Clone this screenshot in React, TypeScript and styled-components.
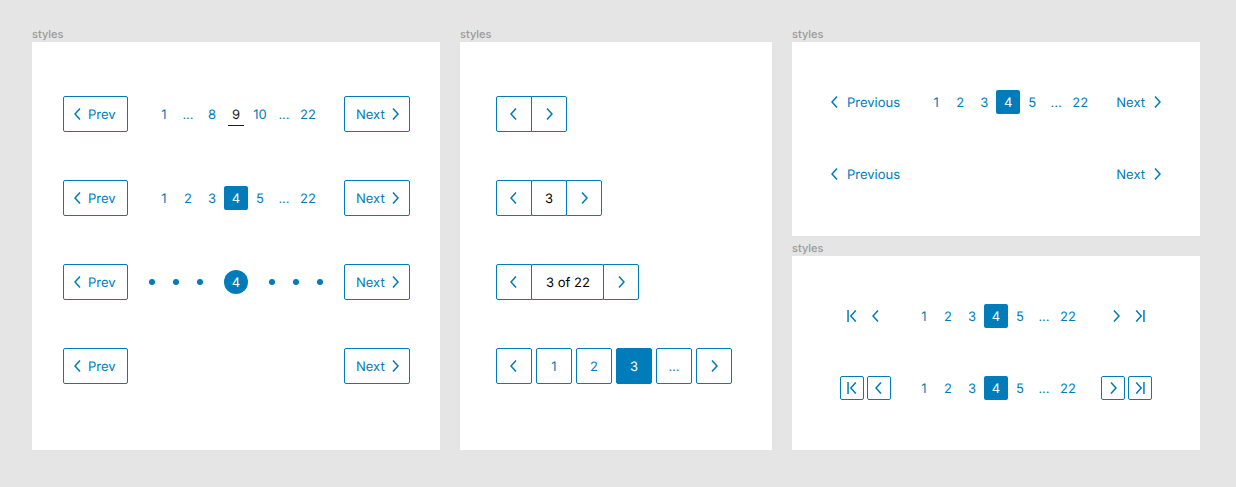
import React from "react";
import styled, { createGlobalStyle, css } from "styled-components";

const blue = "#007cba";
const ink = "#1e1e1e";

const GlobalStyle = createGlobalStyle`
  * { box-sizing: border-box; }
  body {
    margin: 0;
    background: #e5e5e5;
    font-family: Inter, "Liberation Sans", sans-serif;
    font-size: 13px;
    line-height: 16px;
    text-rendering: geometricPrecision;
    color: ${ink};
  }
  button { font: inherit; color: inherit; cursor: pointer; text-rendering: inherit; }
`;

const Board = styled.main`
  display: grid;
  grid-template-columns: 408fr 312fr 408fr;
  gap: 20px;
  padding: 26px 36px 36px 32px;
`;

const Column = styled.div`
  display: flex;
  flex-direction: column;
  gap: 4px;
`;

const Frame = styled.section`
  display: flex;
  flex-direction: column;
`;

const FrameLabel = styled.h2`
  margin: 0;
  font-size: 11px;
  font-weight: 500;
  line-height: 16px;
  color: #999;
`;

const Panel = styled.div<{ $padding: string }>`
  display: flex;
  flex-direction: column;
  gap: 48px;
  padding: ${(p) => p.$padding};
  background: #fff;
`;

const Row = styled.nav`
  display: flex;
  align-items: center;
  justify-content: space-between;
  color: ${blue};
`;

const PageList = styled.div<{ $gap?: number }>`
  display: flex;
  align-items: center;
  gap: ${(p) => p.$gap ?? 0}px;
`;

/* Control text sits slightly low so that figures and capitals look centred. */
const Text = styled.span`
  padding-top: 2px;
`;

const cell = css`
  display: flex;
  align-items: center;
  justify-content: center;
  width: 24px;
  height: 24px;
  padding: 0;
  border: 0;
  background: none;
`;

type Mark = "none" | "square" | "circle" | "underline";

const PageButton = styled.button<{ $mark: Mark }>`
  ${cell}
  ${(p) =>
    (p.$mark === "square" || p.$mark === "circle") &&
    css`
      background: ${blue};
      color: #fff;
      border-radius: ${p.$mark === "circle" ? "50%" : "2px"};
    `}
  ${(p) =>
    p.$mark === "underline" &&
    css`
      width: 16px;
      margin: 0 4px;
      padding-top: 1px;
      border-bottom: 1px solid ${ink};
      color: ${ink};
    `}
`;

const Ellipsis = styled.span`
  ${cell}
`;

const DotButton = styled.button`
  ${cell}
  &::before {
    content: "";
    width: 6px;
    height: 6px;
    border-radius: 50%;
    background: ${blue};
  }
`;

const StepButton = styled.button<{ $dir: "prev" | "next" }>`
  display: flex;
  align-items: center;
  justify-content: ${(p) => (p.$dir === "prev" ? "flex-start" : "space-between")};
  gap: 6px;
  width: ${(p) => (p.$dir === "prev" ? 65 : 66)}px;
  height: 36px;
  padding: ${(p) => (p.$dir === "prev" ? "0 10px" : "0 10px 0 11px")};
  border: 1px solid ${blue};
  border-radius: 2px;
  background: #fff;
`;

const StepLink = styled.button`
  display: flex;
  align-items: center;
  gap: 8px;
  height: 24px;
  padding: 0;
  border: 0;
  background: none;
`;

const IconButton = styled.button<{ $framed?: boolean }>`
  ${cell}
  ${(p) =>
    p.$framed &&
    css`
      border: 1px solid ${blue};
      border-radius: 2px;
    `}
`;

const Segments = styled.nav<{ $joined?: boolean }>`
  display: flex;
  gap: ${(p) => (p.$joined ? 0 : 4)}px;
  color: ${blue};

  ${(p) =>
    p.$joined &&
    css`
      & > * { border-radius: 0; }
      & > * + * { margin-left: -1px; }
      & > :first-child { border-radius: 2px 0 0 2px; }
      & > :last-child { border-radius: 0 2px 2px 0; }
    `}
`;

const segment = css`
  display: flex;
  align-items: center;
  justify-content: center;
  min-width: 36px;
  height: 36px;
  border: 1px solid ${blue};
  border-radius: 2px;
`;

const SegmentButton = styled.button<{ $current?: boolean }>`
  ${segment}
  padding: 0;
  background: ${(p) => (p.$current ? blue : "#fff")};
  color: ${(p) => (p.$current ? "#fff" : blue)};
`;

const SegmentText = styled.span<{ $status?: boolean; $wide?: boolean }>`
  ${segment}
  padding: ${(p) => (p.$wide ? "0 13px 0 14px" : "0")};
  color: ${(p) => (p.$status ? "#000" : blue)};
`;

const Svg = styled.svg`
  display: block;
  flex: none;
  fill: currentColor;
`;

const LeftIcon = () => (
  <Svg width="8" height="12" viewBox="0 0 8 12" aria-hidden="true">
    <path d="M6.6 1 5.4 0 0 6l5.4 6 1.2-1L2 6z" />
  </Svg>
);

const RightIcon = () => (
  <Svg width="8" height="12" viewBox="0 0 8 12" aria-hidden="true">
    <path d="M2.6 0 1.4 1 6 6l-4.6 5 1.2 1L8 6z" />
  </Svg>
);

const FirstIcon = () => (
  <Svg width="10" height="12" viewBox="0 0 10 12" aria-hidden="true">
    <path d="M.3 0h1.5v12H.3z M9.4 1 8.2 0 2.8 6l5.4 6 1.2-1L4.8 6z" />
  </Svg>
);

const LastIcon = () => (
  <Svg width="10" height="12" viewBox="0 0 10 12" aria-hidden="true">
    <path d="M8.2 0h1.5v12H8.2z M1.8 0 .6 1l4.6 5-4.6 5 1.2 1 5.4-6z" />
  </Svg>
);

const Pages = ({ items, current, mark }: { items: string[]; current: string; mark: Mark }) => (
  <PageList>
    {items.map((item, i) =>
      item === "..." ? (
        <Ellipsis key={i}>
          <Text>...</Text>
        </Ellipsis>
      ) : (
        <PageButton
          key={i}
          $mark={item === current ? mark : "none"}
          aria-current={item === current ? "page" : undefined}
        >
          <Text>{item}</Text>
        </PageButton>
      )
    )}
  </PageList>
);

const early = ["1", "2", "3", "4", "5", "...", "22"];
const late = ["1", "...", "8", "9", "10", "...", "22"];

const Boxed = ({ children }: { children?: React.ReactNode }) => (
  <Row aria-label="Pagination">
    <StepButton $dir="prev">
      <LeftIcon />
      <Text>Prev</Text>
    </StepButton>
    {children}
    <StepButton $dir="next">
      <Text>Next</Text>
      <RightIcon />
    </StepButton>
  </Row>
);

const Plain = ({ children }: { children?: React.ReactNode }) => (
  <Row aria-label="Pagination">
    <StepLink>
      <LeftIcon />
      <Text>Previous</Text>
    </StepLink>
    {children}
    <StepLink>
      <Text>Next</Text>
      <RightIcon />
    </StepLink>
  </Row>
);

const Jump = ({ framed }: { framed?: boolean }) => (
  <Row aria-label="Pagination">
    <PageList $gap={framed ? 3 : 0}>
      <IconButton $framed={framed} aria-label="First page"><FirstIcon /></IconButton>
      <IconButton $framed={framed} aria-label="Previous page"><LeftIcon /></IconButton>
    </PageList>
    <Pages items={early} current="4" mark="square" />
    <PageList $gap={framed ? 3 : 0}>
      <IconButton $framed={framed} aria-label="Next page"><RightIcon /></IconButton>
      <IconButton $framed={framed} aria-label="Last page"><LastIcon /></IconButton>
    </PageList>
  </Row>
);

const Joined = ({ status }: { status?: string }) => (
  <Segments $joined aria-label="Pagination">
    <SegmentButton aria-label="Previous page"><LeftIcon /></SegmentButton>
    {status && (
      <SegmentText $status $wide={status.length > 2}>
        <Text>{status}</Text>
      </SegmentText>
    )}
    <SegmentButton aria-label="Next page"><RightIcon /></SegmentButton>
  </Segments>
);

const StyleFrame = ({ padding, children }: { padding: string; children: React.ReactNode }) => (
  <Frame>
    <FrameLabel>styles</FrameLabel>
    <Panel $padding={padding}>{children}</Panel>
  </Frame>
);

export default function App() {
  return (
    <>
      <GlobalStyle />
      <Board>
        <StyleFrame padding="54px 30px 66px 31px">
          <Boxed>
            <Pages items={late} current="9" mark="underline" />
          </Boxed>
          <Boxed>
            <Pages items={early} current="4" mark="square" />
          </Boxed>
          <Boxed>
            <PageList $gap={12}>
              <PageList>
                {["1", "2", "3"].map((n) => <DotButton key={n} aria-label={`Page ${n}`} />)}
              </PageList>
              <PageButton $mark="circle" aria-current="page"><Text>4</Text></PageButton>
              <PageList>
                {["5", "6", "7"].map((n) => <DotButton key={n} aria-label={`Page ${n}`} />)}
              </PageList>
            </PageList>
          </Boxed>
          <Boxed />
        </StyleFrame>

        <StyleFrame padding="54px 36px 66px">
          <Joined />
          <Joined status="3" />
          <Joined status="3 of 22" />
          <Segments aria-label="Pagination">
            <SegmentButton aria-label="Previous page"><LeftIcon /></SegmentButton>
            <SegmentButton><Text>1</Text></SegmentButton>
            <SegmentButton><Text>2</Text></SegmentButton>
            <SegmentButton $current aria-current="page"><Text>3</Text></SegmentButton>
            <SegmentText><Text>...</Text></SegmentText>
            <SegmentButton aria-label="Next page"><RightIcon /></SegmentButton>
          </Segments>
        </StyleFrame>

        <Column>
          <StyleFrame padding="48px 39px 50px">
            <Plain>
              <Pages items={early} current="4" mark="square" />
            </Plain>
            <Plain />
          </StyleFrame>
          <StyleFrame padding="48px 48px 50px">
            <Jump />
            <Jump framed />
          </StyleFrame>
        </Column>
      </Board>
    </>
  );
}
